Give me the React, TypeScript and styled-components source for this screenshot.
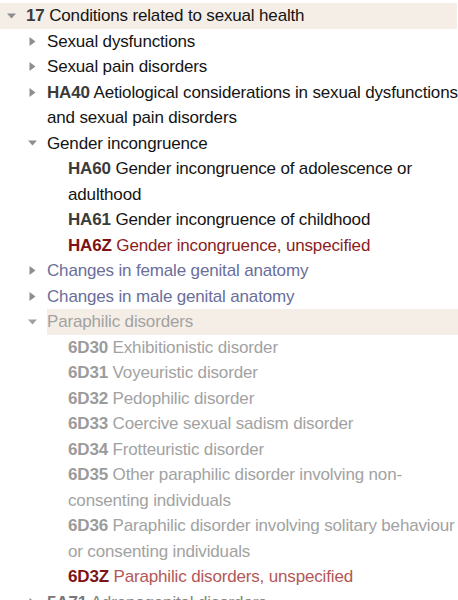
import styled, { createGlobalStyle } from "styled-components";

const GlobalStyle = createGlobalStyle`
  body {
    margin: 0;
    background: #fff;
    font-family: "Liberation Sans", Arial, Helvetica, sans-serif;
    font-size: 17px;
    line-height: 25.5px;
    letter-spacing: -0.16px;
    color: #111;
    overflow: hidden;
  }
`;

type Tone = "default" | "red" | "blue" | "muted" | "mutedRed" | "dim";

const tones: Record<Tone, { code: string; text: string; arrow: string }> = {
  default: { code: "#3b3b3b", text: "#141414", arrow: "#8e8e8e" },
  red: { code: "#7c1212", text: "#8b1d1d", arrow: "#8e8e8e" },
  blue: { code: "#5f6390", text: "#6a6e9b", arrow: "#8e8e8e" },
  muted: { code: "#9b9b9b", text: "#a2a2a2", arrow: "#a0a0a0" },
  mutedRed: { code: "#7c1515", text: "#b25757", arrow: "#a0a0a0" },
  dim: { code: "#777", text: "#858585", arrow: "#8e8e8e" },
};

const Tree = styled.div`
  width: 458px;
  padding-top: 3px;
`;

const Row = styled.div<{ $level: number; $selected?: boolean }>`
  display: flex;
  align-items: flex-start;
  padding-left: ${(p) => 5 + p.$level * 21}px;
  margin-right: 1px;
  background: ${(p) => (p.$selected ? "#f5eee7" : "transparent")};
`;

const Toggle = styled.span`
  flex: 0 0 21px;
  height: 25.5px;
  display: flex;
  align-items: center;
`;

const Label = styled.div<{ $tone: Tone; $hover?: boolean }>`
  flex: 1;
  min-width: 0;
  margin-right: -1px;
  color: ${(p) => tones[p.$tone].text};
  background: ${(p) => (p.$hover ? "#f5eee7" : "transparent")};
`;

const Code = styled.b<{ $tone: Tone }>`
  font-weight: 700;
  color: ${(p) => tones[p.$tone].code};
`;

const Arrow = ({ open, color }: { open: boolean; color: string }) =>
  open ? (
    <svg width="11" height="8" viewBox="0 0 11 8" style={{ marginLeft: 1 }}>
      <path d="M1 1.5 L10 1.5 L5.5 6.5 Z" fill={color} />
    </svg>
  ) : (
    <svg width="9" height="11" viewBox="0 0 9 11" style={{ marginLeft: 2 }}>
      <path d="M1.5 1 L7.5 5.5 L1.5 10 Z" fill={color} />
    </svg>
  );

type Node = {
  level: number;
  toggle?: "open" | "closed";
  code?: string;
  title: string;
  tone?: Tone;
  selected?: boolean;
  hover?: boolean;
};

const nodes: Node[] = [
  { level: 0, toggle: "open", code: "17", title: "Conditions related to sexual health", selected: true },
  { level: 1, toggle: "closed", title: "Sexual dysfunctions" },
  { level: 1, toggle: "closed", title: "Sexual pain disorders" },
  { level: 1, toggle: "closed", code: "HA40", title: "Aetiological considerations in sexual dysfunctions and sexual pain disorders" },
  { level: 1, toggle: "open", title: "Gender incongruence" },
  { level: 2, code: "HA60", title: "Gender incongruence of adolescence or adulthood" },
  { level: 2, code: "HA61", title: "Gender incongruence of childhood" },
  { level: 2, code: "HA6Z", title: "Gender incongruence, unspecified", tone: "red" },
  { level: 1, toggle: "closed", title: "Changes in female genital anatomy", tone: "blue" },
  { level: 1, toggle: "closed", title: "Changes in male genital anatomy", tone: "blue" },
  { level: 1, toggle: "open", title: "Paraphilic disorders", tone: "muted", hover: true },
  { level: 2, code: "6D30", title: "Exhibitionistic disorder", tone: "muted" },
  { level: 2, code: "6D31", title: "Voyeuristic disorder", tone: "muted" },
  { level: 2, code: "6D32", title: "Pedophilic disorder", tone: "muted" },
  { level: 2, code: "6D33", title: "Coercive sexual sadism disorder", tone: "muted" },
  { level: 2, code: "6D34", title: "Frotteuristic disorder", tone: "muted" },
  { level: 2, code: "6D35", title: "Other paraphilic disorder involving non-consenting individuals", tone: "muted" },
  { level: 2, code: "6D36", title: "Paraphilic disorder involving solitary behaviour or consenting individuals", tone: "muted" },
  { level: 2, code: "6D3Z", title: "Paraphilic disorders, unspecified", tone: "mutedRed" },
  { level: 1, toggle: "closed", code: "5A71", title: "Adrenogenital disorders", tone: "dim" },
];

export default function App() {
  return (
    <>
      <GlobalStyle />
      <Tree>
        {nodes.map((n, i) => {
          const tone = n.tone ?? "default";
          return (
            <Row key={i} $level={n.level} $selected={n.selected}>
              <Toggle>
                {n.toggle && <Arrow open={n.toggle === "open"} color={tones[tone].arrow} />}
              </Toggle>
              <Label $tone={tone} $hover={n.hover}>
                {n.code && <Code $tone={tone}>{n.code}</Code>} {n.title}
              </Label>
            </Row>
          );
        })}
      </Tree>
    </>
  );
}
